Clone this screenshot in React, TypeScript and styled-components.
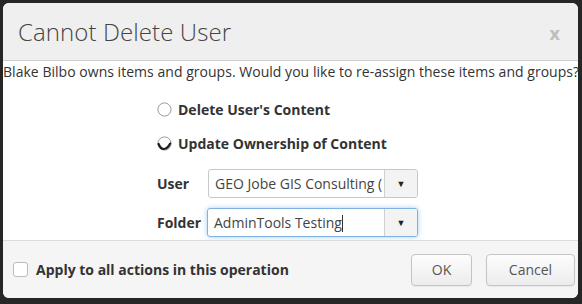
import styled, { createGlobalStyle } from 'styled-components';

const GlobalStyle = createGlobalStyle`
  html, body {
    margin: 0;
    padding: 0;
    background: #262626;
  }
  body {
    font-family: 'Open Sans', 'Liberation Sans', sans-serif;
    color: #333;
  }
`;

const Dialog = styled.div`
  margin: 3px 4px 0 3px;
  width: 575px;
  height: 295px;
  background: #fff;
  border-radius: 6px;
  overflow: hidden;
  display: flex;
  flex-direction: column;
`;

const Header = styled.div`
  flex-shrink: 0;
  height: 57px;
  background: #efefef;
  border-bottom: 1px solid #cfcfcf;
  display: flex;
  align-items: center;
  justify-content: space-between;
  padding: 0 18px 0 15px;
`;

const Title = styled.h3`
  margin: 0;
  font-size: 24px;
  font-weight: 300;
  color: #444;
  letter-spacing: 0.1px;
`;

const Close = styled.span`
  font-size: 18px;
  font-weight: 700;
  color: #bdbdbd;
  margin-top: 2px;
`;

const Body = styled.div`
  flex: 1;
  min-height: 0;
  display: flex;
  flex-direction: column;
`;

const Intro = styled.p`
  margin: 0;
  font-size: 14px;
  line-height: 20px;
  padding-top: 1px;
  white-space: nowrap;
  letter-spacing: 0.03px;
  color: #333;
`;

const Options = styled.div`
  padding: 17px 0 0 154px;
  display: flex;
  flex-direction: column;
`;

const RadioRow = styled.label`
  display: flex;
  align-items: center;
  gap: 6px;
  height: 20px;
  margin-bottom: 14px;
  font-size: 14px;
  font-weight: 700;
  color: #333;
`;

const Radio = styled.span`
  width: 15px;
  height: 15px;
  display: flex;

  & svg {
    width: 15px;
    height: 15px;
  }
`;

const FieldRow = styled.div`
  display: grid;
  grid-template-columns: 51px 210px;
  align-items: center;
  height: 29px;
  margin-bottom: 10px;
  &:first-of-type {
    margin-top: 2px;
  }
`;

const FieldLabel = styled.span`
  font-size: 14px;
  font-weight: 700;
  color: #333;
`;

const Select = styled.div<{ $focused?: boolean }>`
  height: 29px;
  box-sizing: border-box;
  display: flex;
  border: 1px solid ${p => (p.$focused ? '#7fb2e0' : '#c8c8c8')};
  border-radius: 3px;
  background: #fff;
  box-shadow: ${p => (p.$focused ? '0 0 5px rgba(102, 175, 233, 0.6)' : 'none')};
  margin-left: ${p => (p.$focused ? '-1px' : '0')};
  overflow: hidden;
`;

const SelectValue = styled.span`
  flex: 1;
  padding-left: 6px;
  font-size: 14px;
  line-height: 27px;
  color: #444;
  white-space: nowrap;
  overflow: hidden;
`;

const Caret = styled.span`
  width: 32px;
  border-left: 1px solid #d0d0d0;
  background: #f3f3f3;
  display: flex;
  align-items: center;
  justify-content: center;
  font-size: 9px;
  color: #222;
`;

const Cursor = styled.span`
  display: inline-block;
  width: 1px;
  height: 17px;
  background: #333;
  vertical-align: -4px;
`;

const Footer = styled.div`
  flex-shrink: 0;
  height: 57px;
  border-top: 1px solid #dcdcdc;
  background: #f5f5f5;
  display: flex;
  align-items: center;
  padding: 0 3px 0 10px;
  gap: 14px;
`;

const Check = styled.label`
  display: flex;
  align-items: center;
  gap: 8px;
  flex: 1;
  font-size: 14px;
  font-weight: 700;
  color: #333;
`;

const Box = styled.span`
  width: 13px;
  height: 13px;
  border: 1px solid #bbb;
  border-radius: 3px;
  background: #fff;
`;

const Button = styled.button<{ $w: number }>`
  width: ${p => p.$w}px;
  height: 32px;
  border: 1px solid #c4c4c4;
  border-radius: 4px;
  background: linear-gradient(#fdfdfd, #ececec);
  font-family: inherit;
  font-size: 14px;
  color: #555;
  padding: 0;
  box-shadow: 0 1px 1px rgba(0, 0, 0, 0.05);
`;

function RadioIcon({ checked }: { checked?: boolean }) {
  return (
    <Radio>
      <svg viewBox="0 0 15 15">
        <circle cx="7.5" cy="7.5" r="6.6" fill="#fff" stroke="#9a9a9a" strokeWidth="1" />
        {checked && (
          <path
            d="M1.6 8 Q3.5 13.2 7 13 Q10.5 12.8 13.2 7.6"
            fill="none"
            stroke="#1e1e1e"
            strokeWidth="2.2"
            strokeLinecap="round"
          />
        )}
      </svg>
    </Radio>
  );
}

export default function App() {
  return (
    <>
      <GlobalStyle />
      <Dialog>
        <Header>
          <Title>Cannot Delete User</Title>
          <Close>x</Close>
        </Header>
        <Body>
          <Intro>Blake Bilbo owns items and groups. Would you like to re-assign these items and groups?</Intro>
          <Options>
            <RadioRow>
              <RadioIcon />
              Delete User's Content
            </RadioRow>
            <RadioRow>
              <RadioIcon checked />
              Update Ownership of Content
            </RadioRow>
            <FieldRow>
              <FieldLabel>User</FieldLabel>
              <Select>
                <SelectValue>GEO Jobe GIS Consulting (</SelectValue>
                <Caret>▼</Caret>
              </Select>
            </FieldRow>
            <FieldRow>
              <FieldLabel>Folder</FieldLabel>
              <Select $focused>
                <SelectValue>
                  AdminTools Testing<Cursor />
                </SelectValue>
                <Caret>▼</Caret>
              </Select>
            </FieldRow>
          </Options>
        </Body>
        <Footer>
          <Check>
            <Box />
            Apply to all actions in this operation
          </Check>
          <Button $w={61}>OK</Button>
          <Button $w={89}>Cancel</Button>
        </Footer>
      </Dialog>
    </>
  );
}
